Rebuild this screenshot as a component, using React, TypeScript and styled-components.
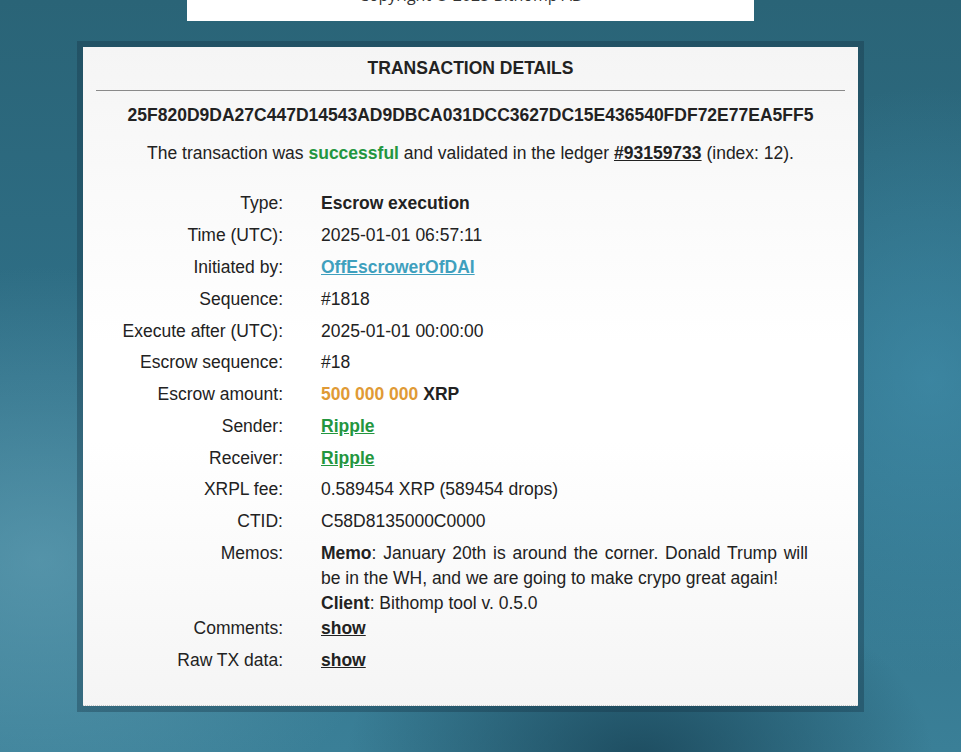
import React from 'react'
import styled, { createGlobalStyle } from 'styled-components'

const GlobalStyle = createGlobalStyle`
	html, body {
		margin: 0;
		padding: 0;
		height: 100%;
		overflow: hidden;
	}
	body {
		font-family: 'Liberation Sans', Arial, sans-serif;
		color: #222;
		background: #2c687c;
	}
`

const Page = styled.div`
	width: 961px;
	height: 752px;
	overflow: hidden;
	display: flex;
	flex-direction: column;
	align-items: center;
	padding-right: 20px;
	box-sizing: border-box;
	background:
		radial-gradient(ellipse 420px 260px at 640px 760px, rgba(20, 60, 78, 0.75), rgba(20, 60, 78, 0) 70%),
		radial-gradient(ellipse 520px 420px at 40px 560px, rgba(110, 170, 190, 0.55), rgba(110, 170, 190, 0) 70%),
		radial-gradient(ellipse 360px 420px at 930px 380px, rgba(70, 150, 180, 0.55), rgba(70, 150, 180, 0) 70%),
		linear-gradient(180deg, #2a6477 0%, #2f7088 50%, #3a7f97 100%);
`

const Footer = styled.div`
	width: 567px;
	height: 41px;
	margin-top: -20px;
	padding-top: 5px;
	box-sizing: border-box;
	background: #fff;
	text-align: center;
	font-family: 'Open Sans', sans-serif;
	font-size: 16px;
	line-height: 20px;
	color: #333;
`

const Frame = styled.div`
	margin-top: 20px;
	padding: 6px;
	background: rgba(20, 50, 65, 0.35);
`

const Panel = styled.div`
	width: 775px;
	height: 659px;
	box-sizing: border-box;
	padding: 0 13px;
	background: linear-gradient(180deg, #f5f5f5 0%, #ffffff 45%, #ffffff 60%, #f5f5f5 100%);
	border-bottom: 1px dotted #c8c8c8;
	font-size: 17.5px;
`

const Title = styled.h1`
	margin: 0;
	padding: 10px 0 11px;
	font-size: 17.5px;
	line-height: 22px;
	font-weight: bold;
	text-align: center;
	color: #222;
	border-bottom: 1px solid #8a8a8a;
`

const Hash = styled.div`
	margin-top: 13px;
	line-height: 22px;
	font-weight: bold;
	text-align: center;
	color: #222;
`

const Status = styled.p`
	margin: 16px 0 0;
	line-height: 22px;
	text-align: center;
	color: #222;
`

const Success = styled.b`
	color: #23963f;
`

const Ledger = styled.a`
	color: #222;
	font-weight: bold;
	text-decoration: underline;
`

const Details = styled.div`
	margin: 24px 0 0 -13px;
	display: grid;
	grid-template-columns: 200px 487px;
	column-gap: 38px;
	line-height: 25px;
`

const Label = styled.div`
	text-align: right;
	padding: 3.4px 0;
	color: #222;
`

const Value = styled.div<{ $tight?: boolean }>`
	padding: ${(p) => (p.$tight ? '3.4px 0 0' : '3.4px 0')};
	margin-bottom: ${(p) => (p.$tight ? '-3.4px' : '0')};
	color: #222;
`

const Memo = styled.div`
	text-align: justify;
`

const Strong = styled.b`
	color: #222;
`

const Account = styled.a<{ $color: string }>`
	color: ${(p) => p.$color};
	font-weight: bold;
	text-decoration: underline;
`

const Amount = styled.b`
	color: #e09a35;
`

type Row = { label: string; value: React.ReactNode; tight?: boolean }

const rows: Row[] = [
	{ label: 'Type:', value: <Strong>Escrow execution</Strong> },
	{ label: 'Time (UTC):', value: '2025-01-01 06:57:11' },
	{ label: 'Initiated by:', value: <Account $color="#3fa0be">OffEscrowerOfDAI</Account> },
	{ label: 'Sequence:', value: '#1818' },
	{ label: 'Execute after (UTC):', value: '2025-01-01 00:00:00' },
	{ label: 'Escrow sequence:', value: '#18' },
	{
		label: 'Escrow amount:',
		value: (
			<>
				<Amount>500 000 000</Amount> <Strong>XRP</Strong>
			</>
		),
	},
	{ label: 'Sender:', value: <Account $color="#23963f">Ripple</Account> },
	{ label: 'Receiver:', value: <Account $color="#23963f">Ripple</Account> },
	{ label: 'XRPL fee:', value: '0.589454 XRP (589454 drops)' },
	{ label: 'CTID:', value: 'C58D8135000C0000' },
	{
		label: 'Memos:',
		tight: true,
		value: (
			<>
				<Memo>
					<Strong>Memo</Strong>: January 20th is around the corner. Donald Trump will be in the WH, and we
					are going to make crypo great again!
				</Memo>
				<div>
					<Strong>Client</Strong>: Bithomp tool v. 0.5.0
				</div>
			</>
		),
	},
	{ label: 'Comments:', value: <Ledger>show</Ledger> },
	{ label: 'Raw TX data:', value: <Ledger>show</Ledger> },
]

export default function App() {
	return (
		<>
			<GlobalStyle />
			<Page>
				<Footer>Copyright © 2025 Bithomp AB</Footer>
				<Frame>
					<Panel>
						<Title>TRANSACTION DETAILS</Title>
						<Hash>25F820D9DA27C447D14543AD9DBCA031DCC3627DC15E436540FDF72E77EA5FF5</Hash>
						<Status>
							The transaction was <Success>successful</Success> and validated in the ledger{' '}
							<Ledger>#93159733</Ledger> (index: 12).
						</Status>
						<Details>
							{rows.map((r) => (
								<React.Fragment key={r.label}>
									<Label>{r.label}</Label>
									<Value $tight={r.tight}>{r.value}</Value>
								</React.Fragment>
							))}
						</Details>
					</Panel>
				</Frame>
			</Page>
		</>
	)
}
